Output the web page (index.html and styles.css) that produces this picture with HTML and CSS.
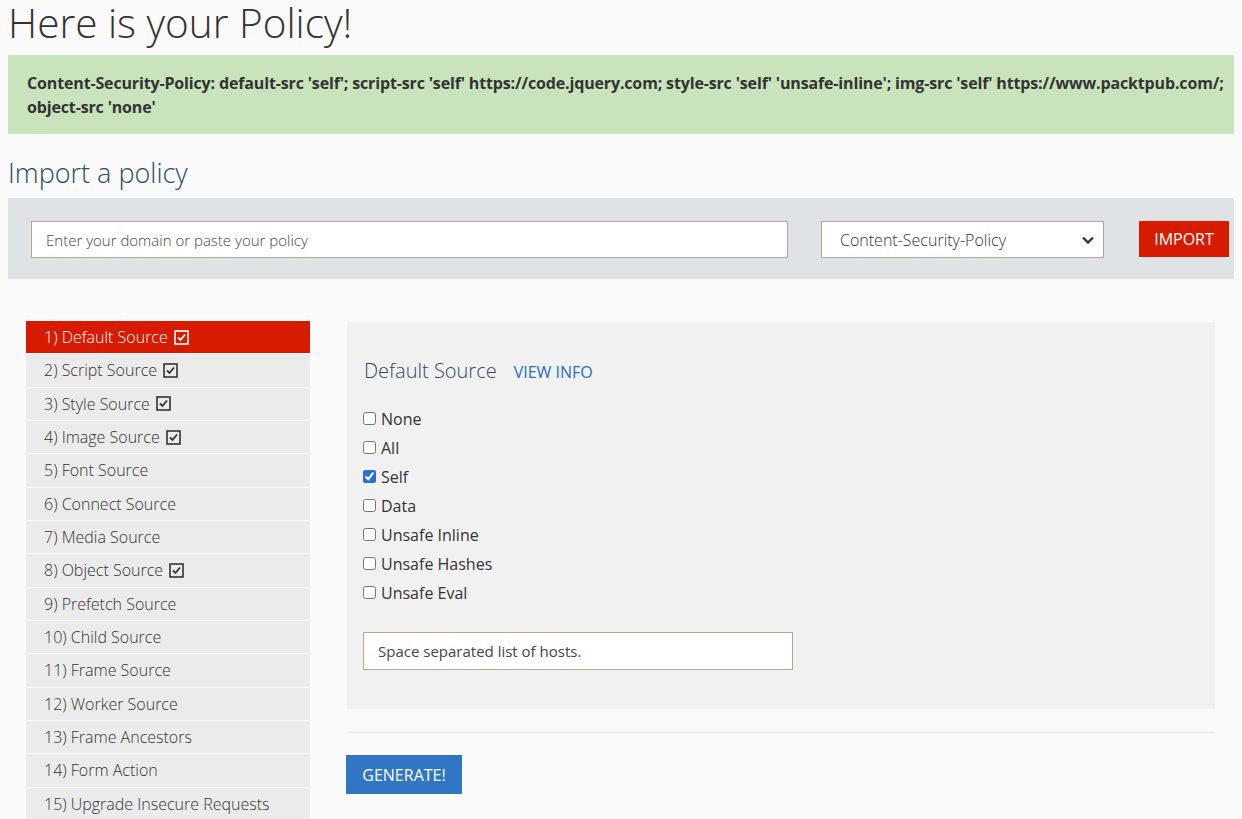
FILE: index.html
```html
<!DOCTYPE html>
<html>
<head>
<meta charset="utf-8">
<link rel="stylesheet" href="styles.css">
</head>
<body>
<h1 class="title">Here is your Policy!</h1>
<div class="policy-box">Content-Security-Policy: default-src 'self'; script-src 'self' https://code.jquery.com; style-src 'self' 'unsafe-inline'; img-src 'self' https://www.packtpub.com/; object-src 'none'</div>
<h2 class="subtitle">Import a policy</h2>
<div class="import-bar">
  <input class="domain-input" type="text" placeholder="Enter your domain or paste your policy">
  <div class="select-box">
    <span class="select-text">Content-Security-Policy</span>
    <svg class="chevron" width="14" height="10" viewBox="0 0 14 10"><path d="M2 2.5 L7 7.5 L12 2.5" fill="none" stroke="#333" stroke-width="2.4"/></svg>
  </div>
  <button class="btn-import">IMPORT</button>
</div>
<div class="main-row">
  <ul class="side-nav">
    <li class="nav-item active">1) Default Source <svg class="chk" width="15" height="15" viewBox="0 0 15 15"><rect x="1" y="1" width="13" height="13" fill="none" stroke="currentColor" stroke-width="1.6"/><path d="M4 7.5 L6.5 10 L11 4.5" fill="none" stroke="currentColor" stroke-width="1.8"/></svg></li>
    <li class="nav-item">2) Script Source <svg class="chk" width="15" height="15" viewBox="0 0 15 15"><rect x="1" y="1" width="13" height="13" fill="none" stroke="currentColor" stroke-width="1.6"/><path d="M4 7.5 L6.5 10 L11 4.5" fill="none" stroke="currentColor" stroke-width="1.8"/></svg></li>
    <li class="nav-item">3) Style Source <svg class="chk" width="15" height="15" viewBox="0 0 15 15"><rect x="1" y="1" width="13" height="13" fill="none" stroke="currentColor" stroke-width="1.6"/><path d="M4 7.5 L6.5 10 L11 4.5" fill="none" stroke="currentColor" stroke-width="1.8"/></svg></li>
    <li class="nav-item">4) Image Source <svg class="chk" width="15" height="15" viewBox="0 0 15 15"><rect x="1" y="1" width="13" height="13" fill="none" stroke="currentColor" stroke-width="1.6"/><path d="M4 7.5 L6.5 10 L11 4.5" fill="none" stroke="currentColor" stroke-width="1.8"/></svg></li>
    <li class="nav-item">5) Font Source</li>
    <li class="nav-item">6) Connect Source</li>
    <li class="nav-item">7) Media Source</li>
    <li class="nav-item">8) Object Source <svg class="chk" width="15" height="15" viewBox="0 0 15 15"><rect x="1" y="1" width="13" height="13" fill="none" stroke="currentColor" stroke-width="1.6"/><path d="M4 7.5 L6.5 10 L11 4.5" fill="none" stroke="currentColor" stroke-width="1.8"/></svg></li>
    <li class="nav-item">9) Prefetch Source</li>
    <li class="nav-item">10) Child Source</li>
    <li class="nav-item">11) Frame Source</li>
    <li class="nav-item">12) Worker Source</li>
    <li class="nav-item">13) Frame Ancestors</li>
    <li class="nav-item">14) Form Action</li>
    <li class="nav-item">15) Upgrade Insecure Requests</li>
  </ul>
  <div class="content-col">
    <div class="panel">
      <div class="panel-head">
        <span class="panel-title">Default Source</span>
        <a class="view-info">VIEW INFO</a>
      </div>
      <label class="opt"><input type="checkbox">None</label>
      <label class="opt"><input type="checkbox">All</label>
      <label class="opt"><input type="checkbox" checked>Self</label>
      <label class="opt"><input type="checkbox">Data</label>
      <label class="opt"><input type="checkbox">Unsafe Inline</label>
      <label class="opt"><input type="checkbox">Unsafe Hashes</label>
      <label class="opt"><input type="checkbox">Unsafe Eval</label>
      <input class="hosts-input" type="text" placeholder="Space separated list of hosts.">
    </div>
    <hr class="divider">
    <button class="btn-generate">GENERATE!</button>
  </div>
</div>
</body>
</html>
```
FILE: styles.css
```css
html, body {
  margin: 0;
  padding: 0;
}
body {
  background: #fafafa;
  padding: 0 8px;
  font-family: "Open Sans", "Liberation Sans", sans-serif;
  color: #333;
}
.title {
  margin: -5px 0 0 0;
  font-size: 40.5px;
  line-height: 56px;
  font-weight: 300;
  color: #333;
}
.policy-box {
  margin-top: 4px;
  background: #c9e3bc;
  padding: 16px 0 15px 19px;
  font-size: 16px;
  line-height: 24px;
  font-weight: 700;
  letter-spacing: -0.15px;
  color: #333;
  width: 1226px;
  box-sizing: border-box;
}
.subtitle {
  margin: 21px 0 7px 0;
  font-size: 27px;
  line-height: 36px;
  font-weight: 300;
  color: #2d4a66;
}
.import-bar {
  display: flex;
  align-items: flex-start;
  background: #dfe3e6;
  padding: 23px 5px 21px 23px;
  width: 1226px;
  box-sizing: border-box;
}
.domain-input {
  width: 757px;
  height: 37px;
  box-sizing: border-box;
  border: 1px solid #bba58f;
  background: #fff;
  padding: 0 14px;
  font-family: "Open Sans", sans-serif;
  font-size: 15px;
  font-weight: 300;
  color: #444;
  outline: none;
}
.domain-input::placeholder, .hosts-input::placeholder {
  color: #444;
}
.select-box {
  margin-left: 33px;
  width: 283px;
  height: 37px;
  box-sizing: border-box;
  border: 1px solid #bba58f;
  background: #fff;
  display: flex;
  align-items: center;
  justify-content: space-between;
  padding: 0 8px 0 18px;
  font-size: 16px;
  font-weight: 300;
  color: #333;
}
.btn-import {
  margin-left: 35px;
  width: 90px;
  height: 36px;
  border: none;
  background: #d61b00;
  color: #fff;
  font-family: "Open Sans", sans-serif;
  font-size: 16px;
  padding: 0;
}
.main-row {
  display: flex;
  align-items: flex-start;
  margin-top: 42px;
  padding-left: 18px;
}
.side-nav {
  list-style: none;
  margin: 0;
  padding: 0;
  width: 284px;
}
.nav-item {
  background: #ebebeb;
  color: #333;
  font-size: 16px;
  font-weight: 300;
  line-height: 24.33px;
  padding: 4px 18px;
  border-bottom: 1px solid #fafafa;
  display: flex;
  align-items: center;
  gap: 6px;
}
.nav-item.active {
  background: #d61b00;
  color: #fff;
}
.chk {
  display: block;
}
.content-col {
  margin-left: 37px;
  width: 868px;
  margin-top: 1px;
}
.panel {
  background: #f1f1f1;
  padding: 35px 16px 39px 16px;
  display: flex;
  flex-direction: column;
  align-items: flex-start;
}
.panel-head {
  display: flex;
  align-items: baseline;
  margin-bottom: 19px;
  margin-left: 1px;
}
.panel-title {
  font-size: 20px;
  line-height: 28px;
  font-weight: 300;
  color: #2d4a66;
}
.view-info {
  margin-left: 17px;
  font-size: 16px;
  color: #2a6ebb;
}
.opt {
  display: flex;
  align-items: center;
  height: 29px;
  font-size: 16px;
  color: #333;
}
.opt input {
  margin: 0 5px 0 0;
  width: 13px;
  height: 13px;
  accent-color: #2d6fd0;
}
.hosts-input {
  margin-top: 25px;
  width: 430px;
  height: 38px;
  box-sizing: border-box;
  border: 1px solid #bba58f;
  background: #fff;
  padding: 0 14px;
  font-family: "Open Sans", sans-serif;
  font-size: 15px;
  color: #444;
  outline: none;
}
.divider {
  margin: 23px 0 0 0;
  border: none;
  border-top: 1px solid #e6e6e6;
  height: 0;
}
.btn-generate {
  margin: 22px 0 0 -1px;
  width: 116px;
  height: 39px;
  border: none;
  background: #3176c2;
  color: #fff;
  font-family: "Open Sans", sans-serif;
  font-size: 16px;
  padding: 0;
}
```
